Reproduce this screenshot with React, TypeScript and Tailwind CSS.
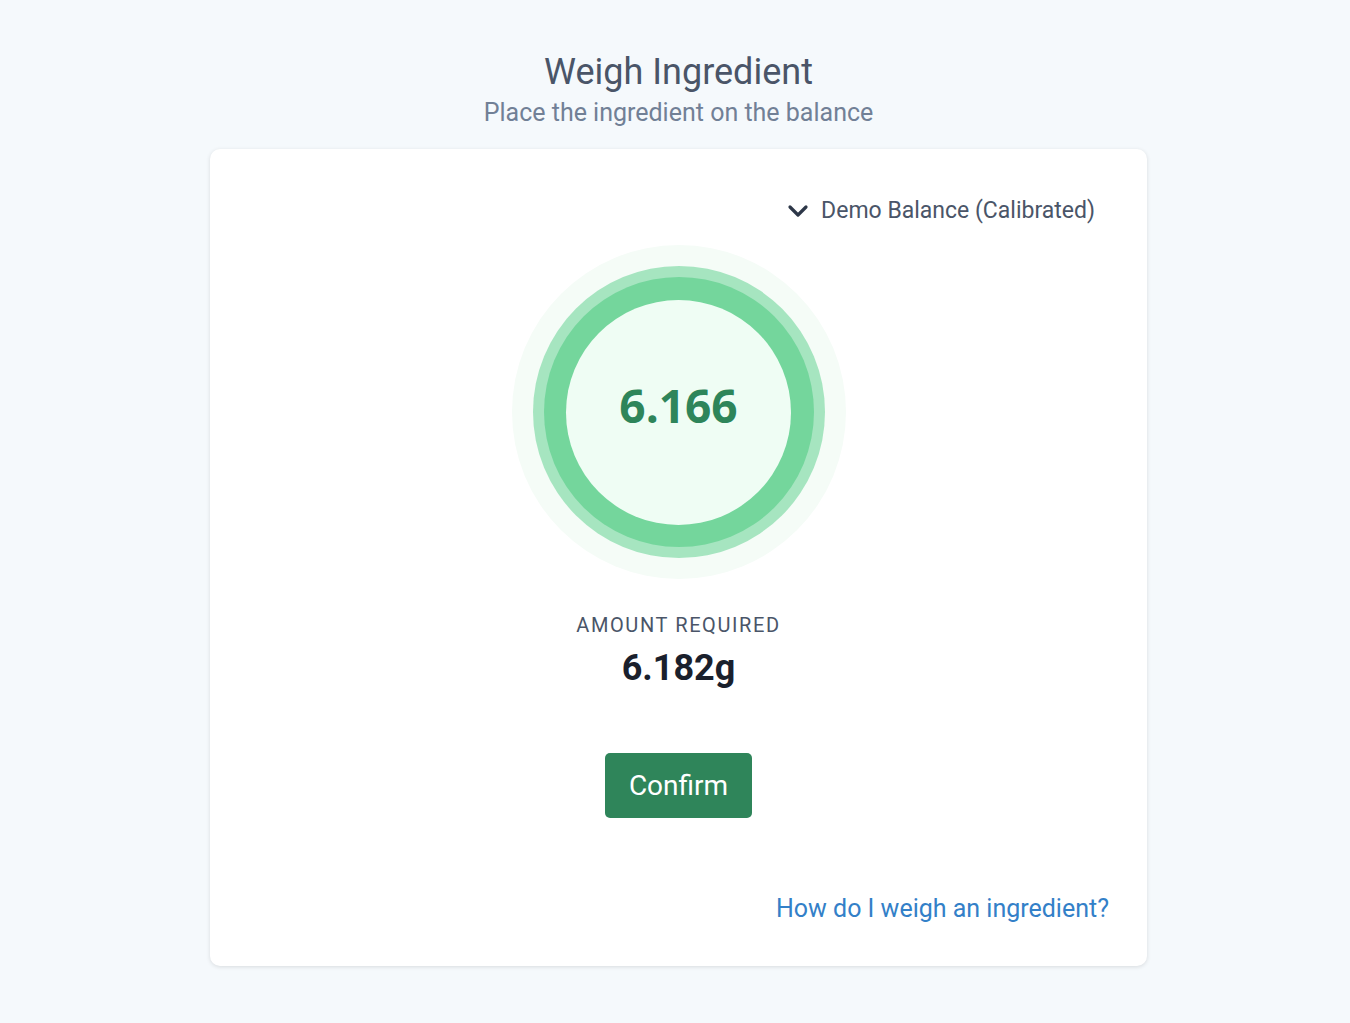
import React from "react";

export default function App() {
  return (
    <div className="min-h-[1023px] w-full bg-[#f5f9fc] flex flex-col items-center pt-[50px] pl-[7px]" style={{ fontFamily: "Roboto, 'Liberation Sans', sans-serif" }}>
      <h1 className="text-[36px] leading-[44px] text-[#4a5568] font-normal">Weigh Ingredient</h1>
      <p className="text-[25px] leading-[30px] text-[#718096] mt-[4px]">Place the ingredient on the balance</p>
      <div className="mt-[21px] w-[937px] h-[817px] bg-white rounded-[10px] shadow-[0_1px_4px_rgba(0,0,0,0.12)] flex flex-col items-center relative">
        <div className="w-full flex justify-end pr-[52px] pt-[48px]">
          <button className="flex items-center gap-[11px] text-[23px] leading-[28px] text-[#4a5568]">
            <svg width="24" height="24" viewBox="0 0 24 24" fill="none" stroke="#2d3748" strokeWidth="3.2" strokeLinecap="round" strokeLinejoin="round">
              <polyline points="4 8 12 16 20 8" />
            </svg>
            <span>Demo Balance (Calibrated)</span>
          </button>
        </div>
        <div className="mt-[20px] w-[334px] h-[334px] rounded-full bg-[#f5fcf7] flex items-center justify-center">
          <div className="w-[292px] h-[292px] rounded-full bg-[#a6e5c0] flex items-center justify-center">
            <div className="w-[270px] h-[270px] rounded-full bg-[#74d69c] flex items-center justify-center">
              <div className="w-[225px] h-[225px] rounded-full bg-[#effdf4] flex items-center justify-center">
                <span className="text-[46px] font-bold text-[#2e855a] leading-none mt-[-14px]" style={{ fontFamily: "'Open Sans', sans-serif" }}>6.166</span>
              </div>
            </div>
          </div>
        </div>
        <div className="mt-[34px] text-[20px] leading-[24px] tracking-[0.08em] text-[#4a5568] uppercase">Amount Required</div>
        <div className="mt-[11px] text-[36px] leading-[40px] font-bold text-[#1a202c]">6.182g</div>
        <button className="mt-[65px] w-[147px] h-[65px] rounded-[5px] bg-[#2f855a] text-white text-[28px] flex items-center justify-center">Confirm</button>
        <div className="w-full flex justify-end pr-[38px] mt-[76px]">
          <a className="text-[25px] leading-[30px] text-[#3380c8]">How do I weigh an ingredient?</a>
        </div>
      </div>
    </div>
  );
}
